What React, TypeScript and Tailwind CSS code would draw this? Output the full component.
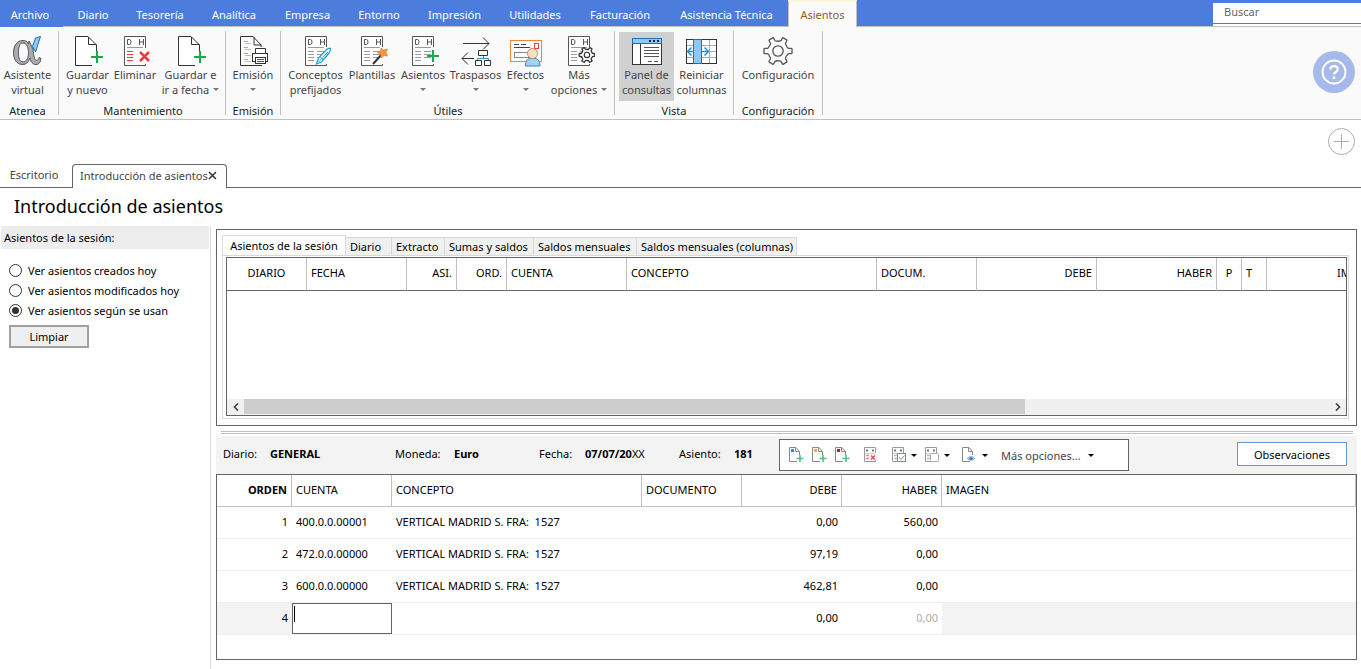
import React from "react";

const svgBase = { width: 32, height: 32, viewBox: "0 0 32 32", fill: "none", className: "shrink-0", "aria-hidden": true } as const;

function AlphaIcon() {
  return (
    <svg {...svgBase}>
      <path d="M17 6L21 14C21.500 20 22.500 25.500 24.500 25.500C26 25.500 26.500 24 27 22.500L29 23.500C28.500 27 27 29.500 24 29.500C20.500 29.500 19 27 18 23C16.500 27 14.500 29.500 10.500 29.500C4.500 29.500 1.500 24 1.500 17.500C1.500 11 5 5.500 11 5.500C13.500 5.500 15.500 6.500 16.500 9ZM11 8C7.500 8 6.500 12 6.500 17.500C6.500 23 7.500 27 11 27C15 27 16.500 22 16.500 17.500C16.500 12.500 14.500 8 11 8Z" fill="#a9abae" stroke="#555" fillRule="evenodd" />
      <path d="M20.500 11.500L23.500 3L28.500 1.500L23.500 17Z" fill="#8ccaf5" stroke="#1b6fb5" />
    </svg>
  );
}

function NewDocIcon() {
  return (
    <svg {...svgBase}>
      <path d="M24.500 18V10L16 1.500H3.500V30.500H20" stroke="#333" fill="#fff" />
      <path d="M16.500 2V9.500H24.500" stroke="#333" />
      <path d="M25 16V28M19 22H31" stroke="#18a94f" strokeWidth="2" />
    </svg>
  );
}

function Ledger({ children }: { children?: React.ReactNode }) {
  return (
    <svg {...svgBase}>
      <path d="M26.500 12V1.500H5.500V30.500H26.500V29" stroke="#555" fill="#fff" />
      <path d="M8.500 4.500V9.500H10.500Q12 9.500 12 7T10.500 4.500ZM20.500 4V10M24.500 4V10M20.500 7H24.500" stroke="#555" />
      <path d="M8 12.500H24" stroke="#999" />
      <path d="M8 16.500H14M8 19.500H14M8 22.500H14M8 25.500H14M17 16.500H24M17 19.500H24M17 22.500H24" stroke="#9a9a9a" />
      {children}
    </svg>
  );
}

function DeleteIcon() {
  return (
    <svg {...svgBase}>
      <path d="M26.500 13V1.500H5.500V30.500H26.500V29" stroke="#555" fill="#fff" />
      <path d="M8.500 4.500V9.500H10.500Q12 9.500 12 7T10.500 4.500ZM20.500 4V10M24.500 4V10M20.500 7H24.500" stroke="#555" />
      <path d="M8 12.500H24" stroke="#999" />
      <path d="M8 16.500H14M8 19.500H14M8 22.500H14M8 25.500H14" stroke="#ee3a3a" />
      <path d="M21 17L30 26M30 17L21 26" stroke="#ee3a3a" strokeWidth="2.500" />
    </svg>
  );
}

function PrintIcon() {
  return (
    <svg {...svgBase}>
      <path d="M24 12V10L16 1.500H3.500V30.500H25" stroke="#333" fill="#fff" />
      <path d="M17 2V10H24.500" stroke="#333" />
      <path d="M7 6.500H11M7 12.500H11M7 18.500H11M7 24.500H11" stroke="#f0a020" />
      <path d="M8 8.500H14M8 14.500H14M8 20.500H14M8 26.500H14" stroke="#bbb" />
      <path d="M18.500 18V13.500H28.500V18" fill="#fff" stroke="#333" />
      <rect x="15.500" y="18.500" width="15" height="8" fill="#fff" stroke="#333" />
      <rect x="18.500" y="22.500" width="10" height="6" fill="#fff" stroke="#333" />
      <path d="M20 24.500H27M20 26.500H27" stroke="#555" />
    </svg>
  );
}

function PenIcon() {
  return (
    <Ledger>
      <path d="M16.500 29L18.500 23L27 14Q28.500 13 30.500 13.500Q30.500 16 29 18L21.500 27Z" fill="#fff" stroke="#1fa3dc" strokeWidth="1.300" />
      <path d="M18.500 27L28 17M20.500 22L23 25" stroke="#1fa3dc" />
    </Ledger>
  );
}

function WandIcon() {
  return (
    <Ledger>
      <path d="M17 29L27 18" stroke="#333" strokeWidth="2" />
      <path d="M25 13L27.500 15L31.500 14L30 17.500L31.500 21L28 20.500L25 23L24.500 19L21.500 17.500L24.500 16.500Z" fill="#f3963f" stroke="#d9731f" strokeWidth=".6" />
    </Ledger>
  );
}

function AddEntryIcon() {
  return (
    <Ledger>
      <path d="M26 15V27M20 21H32" stroke="#18a94f" strokeWidth="2" />
    </Ledger>
  );
}

const gearPoint = (x: number, y: number, turn: number) => {
  const angle = (turn * Math.PI) / 3;
  const px = 16 + x * Math.cos(angle) - y * Math.sin(angle);
  const py = 16 + x * Math.sin(angle) + y * Math.cos(angle);
  return `${px.toFixed(2)} ${py.toFixed(2)}`;
};

const gearPath = [0, 1, 2, 3, 4, 5]
  .map((turn) => {
    const p = (x: number, y: number) => gearPoint(x, y, turn);
    return `${turn ? "L" : "M"}${p(10.5, -2.6)}L${p(13.3, -2.6)}Q${p(14, -2.6)} ${p(14, -1.9)}L${p(14, 1.9)}Q${p(14, 2.6)} ${p(13.3, 2.6)}L${p(10.5, 2.6)}Q${p(9.6, 2.8)} ${p(9, 4.4)}Q${p(7.2, 6.2)} ${gearPoint(10.5, -2.6, turn + 1)}`;
  })
  .join("") + "Z";

function EntryGearIcon() {
  return (
    <Ledger>
      <g transform="translate(15 11) scale(.56)">
        <path d={gearPath} fill="#fff" stroke="#333" strokeWidth="2.300" strokeLinejoin="round" />
        <circle cx="16" cy="16" r="4.800" stroke="#333" strokeWidth="2" />
      </g>
    </Ledger>
  );
}

function GearIcon() {
  return (
    <svg {...svgBase}>
      <path d={gearPath} stroke="#555" strokeWidth="1.300" strokeLinejoin="round" />
      <circle cx="16" cy="16" r="5.200" stroke="#555" strokeWidth="1.300" />
    </svg>
  );
}

function TransferIcon() {
  return (
    <svg {...svgBase}>
      <path d="M3 8.500H29M23 2.500L29 8.500L23 14.500" stroke="#333" />
      <path d="M14 23.500H2M8 17.500L2 23.500L8 29.500" stroke="#333" />
      <path d="M23.500 21V23.500M17.500 26V23.500H28.500V26" stroke="#2d8fd6" />
      <path d="M18.500 15.500H27.500V20.500H18.500ZM15.500 25.500H21.500V30.500H15.500ZM24.500 25.500H30.500V30.500H24.500Z" fill="#fff" stroke="#333" />
    </svg>
  );
}

function EffectsIcon() {
  return (
    <svg {...svgBase}>
      <rect x=".5" y="5.500" width="31" height="21" fill="#fff" stroke="#ee8634" />
      <path d="M4 9.500H9M11 9.500H16M4 12.500H20" stroke="#444" />
      <rect x="4.500" y="17.500" width="14" height="5" stroke="#888" />
      <rect x="24.500" y="8.500" width="4" height="5" stroke="#e43" />
      <path d="M15.500 31C15.500 26 17 23 22.500 23S30 26 30 31Z" fill="#a3d1f3" stroke="#3a83c0" />
      <circle cx="22.500" cy="18.500" r="5" fill="#fde0c4" stroke="#c98b5a" />
    </svg>
  );
}

function PanelIcon() {
  return (
    <svg {...svgBase}>
      <rect x="1.500" y="3.500" width="29" height="26" fill="#fff" stroke="#333" />
      <rect x="1.500" y="3.500" width="29" height="5" fill="#8ccaf5" stroke="#1b6fb5" />
      <path d="M18 6H20M22 6H24M26 6H28" stroke="#222" strokeWidth="2" />
      <path d="M9.500 9V29" stroke="#333" />
      <path d="M13 12.500H28M13 15.500H28M13 18.500H28M13 21.500H28M17 26.500H21M23 26.500H27" stroke="#555" />
    </svg>
  );
}

function ColumnsIcon() {
  return (
    <svg {...svgBase}>
      <rect x=".5" y="4.500" width="30" height="24" fill="#fff" stroke="#333" />
      <path d="M1 10.500H30M1 16.500H30M1 22.500H30M23.500 5V28" stroke="#aaa" />
      <rect x="7.500" y="4.500" width="8" height="24" fill="#8ccaf5" stroke="#1b6fb5" />
      <path d="M8 16.500H1.500M5.500 12.500L1.500 16.500L5.500 20.500M15.500 16.500H22.500M18.500 12.500L22.500 16.500L18.500 20.500" stroke="#2d8fd6" strokeWidth="1.500" />
    </svg>
  );
}

function Caret({ dark = false }: { dark?: boolean }) {
  return (
    <svg width="6" height="3" viewBox="0 0 6 3" className="inline-block shrink-0" aria-hidden="true">
      <path d="M0 0H6L3 3Z" fill={dark ? "#000" : "#777"} />
    </svg>
  );
}

type Command = { icon: React.ReactNode; lines: [string, string?]; width: string; caret?: boolean; active?: boolean };
type Group = { name: string; width: string; commands: Command[] };

const groups: Group[] = [
  { name: "Atenea", width: "w-[59px] pr-[3px]", commands: [{ icon: <AlphaIcon />, lines: ["Asistente", "virtual"], width: "w-[54px]" }] },
  {
    name: "Mantenimiento", width: "w-[167px] pl-[2px]", commands: [
      { icon: <NewDocIcon />, lines: ["Guardar", "y nuevo"], width: "w-[48px]" },
      { icon: <DeleteIcon />, lines: ["Eliminar"], width: "w-[47px]" },
      { icon: <NewDocIcon />, lines: ["Guardar e", "ir a fecha"], width: "w-[64px]", caret: true },
    ],
  },
  { name: "Emisión", width: "w-[55px]", commands: [{ icon: <PrintIcon />, lines: ["Emisión"], width: "w-[48px]", caret: true }] },
  {
    name: "Útiles", width: "w-[334px] pl-[1px]", commands: [
      { icon: <PenIcon />, lines: ["Conceptos", "prefijados"], width: "w-[60px]" },
      { icon: <WandIcon />, lines: ["Plantillas"], width: "w-[53px]" },
      { icon: <AddEntryIcon />, lines: ["Asientos"], width: "w-[49px]", caret: true },
      { icon: <TransferIcon />, lines: ["Traspasos"], width: "w-[56px]", caret: true },
      { icon: <EffectsIcon />, lines: ["Efectos"], width: "w-[44px]", caret: true },
      { icon: <EntryGearIcon />, lines: ["Más", "opciones"], width: "w-[63px]", caret: true },
    ],
  },
  {
    name: "Vista", width: "w-[119px]", commands: [
      { icon: <PanelIcon />, lines: ["Panel de", "consultas"], width: "w-[55px]", active: true },
      { icon: <ColumnsIcon />, lines: ["Reiniciar", "columnas"], width: "w-[55px]" },
    ],
  },
  { name: "Configuración", width: "w-[89px]", commands: [{ icon: <GearIcon />, lines: ["Configuración"], width: "w-[80px]" }] },
];

const menus: [string, string][] = [
  ["Archivo", "w-[63px] pr-[9px]"], ["Diario", "w-[60px]"], ["Tesorería", "w-[74px]"], ["Analítica", "w-[74px]"],
  ["Empresa", "w-[73px]"], ["Entorno", "w-[70px]"], ["Impresión", "w-[81px]"], ["Utilidades", "w-[80px]"],
  ["Facturación", "w-[90px]"], ["Asistencia Técnica", "w-[123px]"],
];

function MenuBar() {
  return (
    <nav className="flex h-[27px] bg-[#4d7ddc] text-white">
      {menus.map(([name, width], i) => (
        <button key={name} className={`${width} px-[6px] pt-[2px] whitespace-nowrap ${i ? "border-b border-[#c0c0c0]" : ""}`}>{name}</button>
      ))}
      <button className="w-[69px] border-x border-t-2 border-x-[#c0c0c0] border-t-[#fdf6df] bg-[#fafafa] text-[#8a6210]">Asientos</button>
      <div className="flex-1 border-b border-[#c0c0c0]" />
      <div className="w-[148px] border-b border-[#c0c0c0] pt-[3px]">
        <div className="bg-white pb-[2px]">
          <input aria-label="Buscar" placeholder="Buscar" className="block h-[21px] w-full border-b border-[#777] bg-white px-[11px] pb-[3px] outline-none placeholder:text-[#666]" />
        </div>
      </div>
    </nav>
  );
}

function CommandButton({ command }: { command: Command }) {
  const { icon, lines, width, caret, active } = command;
  return (
    <button className={`${width} flex h-[69px] flex-col items-center pt-[3px] whitespace-nowrap text-[#444] ${active ? "bg-[#d0d0d0]" : ""}`}>
      {icon}
      <span>{lines[0]}</span>
      <span className="flex h-[15px] items-center gap-1">
        {lines[1]}
        {caret && <Caret />}
      </span>
    </button>
  );
}

function Ribbon() {
  return (
    <header className="flex h-[93px] border-b border-[#c0c0c0] bg-[#fafafa]">
      {groups.map((group) => (
        <section key={group.name} className={`${group.width} my-1 flex shrink-0 flex-col items-center border-r border-[#c0c0c0] pt-[1px]`}>
          <div className="flex">
            {group.commands.map((command) => <CommandButton key={command.lines.join(" ")} command={command} />)}
          </div>
          <h2 className="mt-[2px] whitespace-nowrap text-[#222]">{group.name}</h2>
        </section>
      ))}
      <button aria-label="Ayuda" className="mt-6 mr-[6px] ml-auto flex size-[42px] items-center justify-center rounded-full bg-[#a5b9eb]">
        <svg width="26" height="26" viewBox="0 0 26 26" fill="none" stroke="#fff" strokeWidth="2">
          <circle cx="13" cy="13" r="11.500" />
          <path d="M9.300 10.500C9.300 5.800 16.700 6 16.700 10.500C16.700 13 13 13 13 15.500" strokeWidth="2.200" />
          <path d="M13 17.500V20" strokeWidth="2.400" />
        </svg>
      </button>
    </header>
  );
}

function DocumentTabs() {
  return (
    <div className="flex h-[68px]">
      <div className="flex items-end text-[#444]">
        <button className="h-6 w-[72px] border-b border-[#646464] pr-1 pb-[2px]">Escritorio</button>
        <div className="flex h-6 w-[155px] items-center justify-between rounded-t-[4px] border-x border-t border-[#646464] pr-[9px] pb-[2px] pl-[7px]">
          <button className="whitespace-nowrap">Introducción de asientos</button>
          <button aria-label="Cerrar">
            <svg width="9" height="9" viewBox="0 0 9 9" className="block"><path d="M1 1L8 8M8 1L1 8" stroke="#333" strokeWidth="1.500" /></svg>
          </button>
        </div>
      </div>
      <div className="flex flex-1 items-start justify-end border-b border-[#646464] pt-2 pr-[6px]">
        <button aria-label="Añadir">
          <svg width="27" height="27" viewBox="0 0 27 27" fill="none" stroke="#aaa" className="block">
            <circle cx="13.500" cy="13.500" r="13" />
            <path d="M13.500 6V21M6 13.500H21" />
          </svg>
        </button>
      </div>
    </div>
  );
}

function SessionFilter() {
  return (
    <aside className="w-[211px] shrink-0 border-r border-[#d9d9d9]">
      <h2 className="mx-px bg-[#ededed] py-1 pl-[3px]">Asientos de la sesión:</h2>
      <div className="mt-[11px] flex flex-col pl-[9px]">
        {["Ver asientos creados hoy", "Ver asientos modificados hoy", "Ver asientos según se usan"].map((label, i) => (
          <label key={label} className="flex h-5 items-center gap-[6px]">
            <input type="radio" name="session" defaultChecked={i === 2} className="size-[13px] appearance-none rounded-full border border-[#333] bg-white bg-clip-content p-[2px] checked:bg-[#333]" />
            {label}
          </label>
        ))}
        <button className="mt-[5px] h-[23px] w-20 border-2 border-[#a0a0a0] bg-[#efefef]">Limpiar</button>
      </div>
    </aside>
  );
}

const sessionColumns: [string, string][] = [
  ["DIARIO", "w-20 text-center"], ["FECHA", "w-[100px] text-left"], ["ASI.", "w-[50px] text-right"], ["ORD.", "w-[50px] text-right"],
  ["CUENTA", "w-[120px] text-left"], ["CONCEPTO", "w-[250px] text-left"], ["DOCUM.", "w-[100px] text-left"], ["DEBE", "w-[120px] text-right"],
  ["HABER", "w-[120px] text-right"], ["P", "w-[25px] text-center"], ["T", "w-[25px] text-left"], ["IMPORTE", "w-[123px] text-right"],
];

const sessionTabs: [string, string][] = [
  ["Diario", "w-[46px]"], ["Extracto", "w-[53px]"], ["Sumas y saldos", "w-[89px]"], ["Saldos mensuales", "w-[103px]"], ["Saldos mensuales (columnas)", "w-[160px]"],
];

function SessionPanel() {
  return (
    <section className="border border-[#646464] pt-[5px] pr-[7px] pb-[6px] pl-[5px]">
      <div className="flex items-end">
        <button className="h-5 w-[124px] border-x border-t border-[#d9d9d9] bg-white whitespace-nowrap">Asientos de la sesión</button>
        {sessionTabs.map(([name, width]) => (
          <button key={name} className={`${width} h-[18px] border-t border-r border-[#d9d9d9] bg-[#f0f0f0] pl-1 text-left whitespace-nowrap`}>{name}</button>
        ))}
      </div>
      <div className="border border-[#d9d9d9] pt-[1px] pr-[1px] pb-[2px] pl-[3px]">
        <div className="flex h-[159px] flex-col overflow-hidden border border-[#646464]">
          <div className="flex-1 overflow-hidden">
            <table className="w-[1163px] table-fixed border-separate border-spacing-0">
              <thead>
                <tr className="h-[33px]">
                  {sessionColumns.map(([name, style]) => (
                    <th key={name} className={`${style} border-r border-b border-r-[#c0c0c0] border-b-[#646464] px-1 pb-[3px] font-normal whitespace-nowrap`}>{name}</th>
                  ))}
                </tr>
              </thead>
            </table>
          </div>
          <div className="flex h-4 shrink-0 bg-[#f0f0f0]">
            <button aria-label="Desplazar a la izquierda" className="flex w-[17px] items-center justify-center">
              <svg width="6" height="8" viewBox="0 0 6 8" fill="none"><path d="M5 .5L1.500 4L5 7.500" stroke="#444" strokeWidth="1.700" /></svg>
            </button>
            <div className="flex-1"><div className="h-[15px] w-[72%] bg-[#cdcdcd]" /></div>
            <button aria-label="Desplazar a la derecha" className="flex w-[17px] items-center justify-center">
              <svg width="6" height="8" viewBox="0 0 6 8" fill="none"><path d="M1 .5L4.500 4L1 7.500" stroke="#444" strokeWidth="1.700" /></svg>
            </button>
          </div>
        </div>
      </div>
    </section>
  );
}

const smallSvg = { width: 16, height: 16, viewBox: "0 0 16 16", fill: "none", className: "block", "aria-hidden": true } as const;

function SmallDoc({ color }: { color: string }) {
  return (
    <svg {...smallSvg}>
      <path d="M11.500 8V4.500L8 .5H1.500V14.500H9M7.500 1V4.500H11" stroke="#888" fill="#fff" />
      <rect x="3" y="2" width="3" height="3" fill={color} />
      <path d="M12 8V15M8.500 11.500H15.500" stroke="#4dc283" strokeWidth="1.600" />
    </svg>
  );
}

function SmallLedger({ children, line = "#bbb" }: { children: React.ReactNode; line?: string }) {
  return (
    <svg {...smallSvg}>
      <path d="M13.500 6V.5H2.500V14.500H13.500V13" stroke="#999" fill="#fff" />
      <path d="M4 3.500H6M10 3.500H12" stroke="#777" strokeWidth="2" />
      <path d="M3 6.500H13" stroke="#ccc" />
      <path d="M4 8.500H7M4 11.500H7" stroke={line} strokeWidth="1.500" />
      {children}
    </svg>
  );
}

function EntryToolbar() {
  return (
    <div className="flex h-8 w-[350px] items-center border border-[#646464] bg-white pl-2">
      <div className="flex gap-[7px]">
        <button aria-label="Nuevo asiento"><SmallDoc color="#1296db" /></button>
        <button aria-label="Nuevo apunte"><SmallDoc color="#f0b030" /></button>
        <button aria-label="Nueva línea"><SmallDoc color="#d01030" /></button>
      </div>
      <button aria-label="Eliminar apunte" className="ml-3">
        <SmallLedger line="#f08080"><path d="M9 8.500L13 12.500M13 8.500L9 12.500" stroke="#f05050" strokeWidth="1.700" /></SmallLedger>
      </button>
      <button aria-label="Verificar" className="ml-3 flex items-center gap-[5px]">
        <SmallLedger><rect x="7.500" y="6.500" width="8" height="8" fill="#fff" stroke="#888" /><path d="M9 10L11 12.500L14.500 8.500" stroke="#3cb878" /></SmallLedger><Caret dark />
      </button>
      <button aria-label="Copiar" className="ml-[6px] flex items-center gap-[5px]">
        <SmallLedger><rect x="7.500" y="6.500" width="8" height="8" rx="1" fill="#fff" stroke="#aaa" /></SmallLedger><Caret dark />
      </button>
      <button aria-label="Ver documento" className="ml-[11px] flex items-center gap-[5px]">
        <svg {...smallSvg}>
          <path d="M11.500 8V4.500L8 .5H1.500V14.500H9M7.500 1V4.500H11" stroke="#888" fill="#fff" />
          <path d="M6 11.500Q10 7.500 14 11.500Q10 15 6 11.500Z" fill="#b8d4ec" stroke="#8fb4d8" />
          <circle cx="10" cy="11.500" r="1.600" fill="#3878b0" />
        </svg>
        <Caret dark />
      </button>
      <button className="ml-[13px] flex items-center gap-[7px] whitespace-nowrap text-[#444]">Más opciones...<Caret dark /></button>
    </div>
  );
}

const entryColumns = ["ORDEN", "CUENTA", "CONCEPTO", "DOCUMENTO", "DEBE", "HABER", "IMAGEN"];
const entries = [
  ["1", "400.0.0.00001", "VERTICAL MADRID S. FRA:  1527", "", "0,00", "560,00", ""],
  ["2", "472.0.0.00000", "VERTICAL MADRID S. FRA:  1527", "", "97,19", "0,00", ""],
  ["3", "600.0.0.00000", "VERTICAL MADRID S. FRA:  1527", "", "462,81", "0,00", ""],
];
const rightAligned = (i: number) => (i === 0 || i === 4 || i === 5 ? "text-right" : "text-left");

function EntryEditor() {
  return (
    <section>
      <div className="flex h-[38px] items-center bg-[#f3f3f3] pl-[7px]">
        <dl className="flex pb-1">
          <div className="flex w-[172px]"><dt className="w-[47px]">Diario:</dt><dd className="font-bold">GENERAL</dd></div>
          <div className="flex w-36"><dt className="w-[59px]">Moneda:</dt><dd className="font-bold">Euro</dd></div>
          <div className="flex w-[140px]"><dt className="w-[46px]">Fecha:</dt><dd><b>07/07/20</b>XX</dd></div>
          <div className="flex w-[100px]"><dt className="w-[55px]">Asiento:</dt><dd className="font-bold">181</dd></div>
        </dl>
        <EntryToolbar />
        <button className="mt-[6px] mr-[10px] mb-2 ml-auto h-6 w-[110px] border border-[#6c93e0] bg-white">Observaciones</button>
      </div>
      <div className="h-[186px] border border-[#646464]">
        <table className="w-full table-fixed border-separate border-spacing-0">
          <colgroup>
            <col className="w-[75px]" /><col className="w-[100px]" /><col className="w-[250px]" />
            <col className="w-[100px]" /><col className="w-[100px]" /><col className="w-[100px]" /><col />
          </colgroup>
          <thead>
            <tr className="h-8">
              {entryColumns.map((name, i) => (
                <th key={name} className={`${rightAligned(i)} ${i ? "font-normal" : "font-bold"} border-r border-b border-[#c0c0c0] px-1 pb-[2px]`}>{name}</th>
              ))}
            </tr>
          </thead>
          <tbody>
            {entries.map((row) => (
              <tr key={row[0]} className="h-8">
                {row.map((cell, i) => (
                  <td key={i} className={`${rightAligned(i)} border-b border-[#f0f0f0] px-1 pb-[2px] whitespace-pre`}>{cell}</td>
                ))}
              </tr>
            ))}
            <tr className="h-8">
              <td className="border-b border-[#f0f0f0] bg-[#f3f3f3] px-1 pb-[2px] text-right">4</td>
              <td className="border-b border-[#f0f0f0] p-0">
                <div className="flex h-[31px] items-start border border-[#646464] py-[2px] pl-[1px]">
                  <span className="h-4 w-px bg-black" />
                  <input aria-label="Cuenta" className="min-w-0 flex-1 outline-none" />
                </div>
              </td>
              <td className="border-b border-[#f0f0f0]" />
              <td className="border-b border-[#f0f0f0]" />
              <td className="border-b border-[#f0f0f0] px-1 pb-[2px] text-right">0,00</td>
              <td className="border-b border-[#f0f0f0] px-1 pb-[2px] text-right text-[#aaa]">0,00</td>
              <td className="border-b border-[#f0f0f0] bg-[#f3f3f3]" />
            </tr>
          </tbody>
        </table>
      </div>
    </section>
  );
}

export default function App() {
  return (
    <div className="flex min-h-screen flex-col bg-white font-['Noto_Sans','Open_Sans',sans-serif] text-[11px] leading-[15px] text-black">
      <MenuBar />
      <Ribbon />
      <DocumentTabs />
      <h1 className="h-[38px] pt-1 pl-[14px] text-[18px] leading-7">Introducción de asientos</h1>
      <div className="flex flex-1">
        <SessionFilter />
        <main className="min-w-0 flex-1 pt-[3px] pr-1 pl-[5px]">
          <SessionPanel />
          <div role="separator" className="mt-[5px] mr-1 mb-[2px] ml-[5px] h-[3px] border-y border-[#c0c0c0]" />
          <EntryEditor />
        </main>
      </div>
    </div>
  );
}
